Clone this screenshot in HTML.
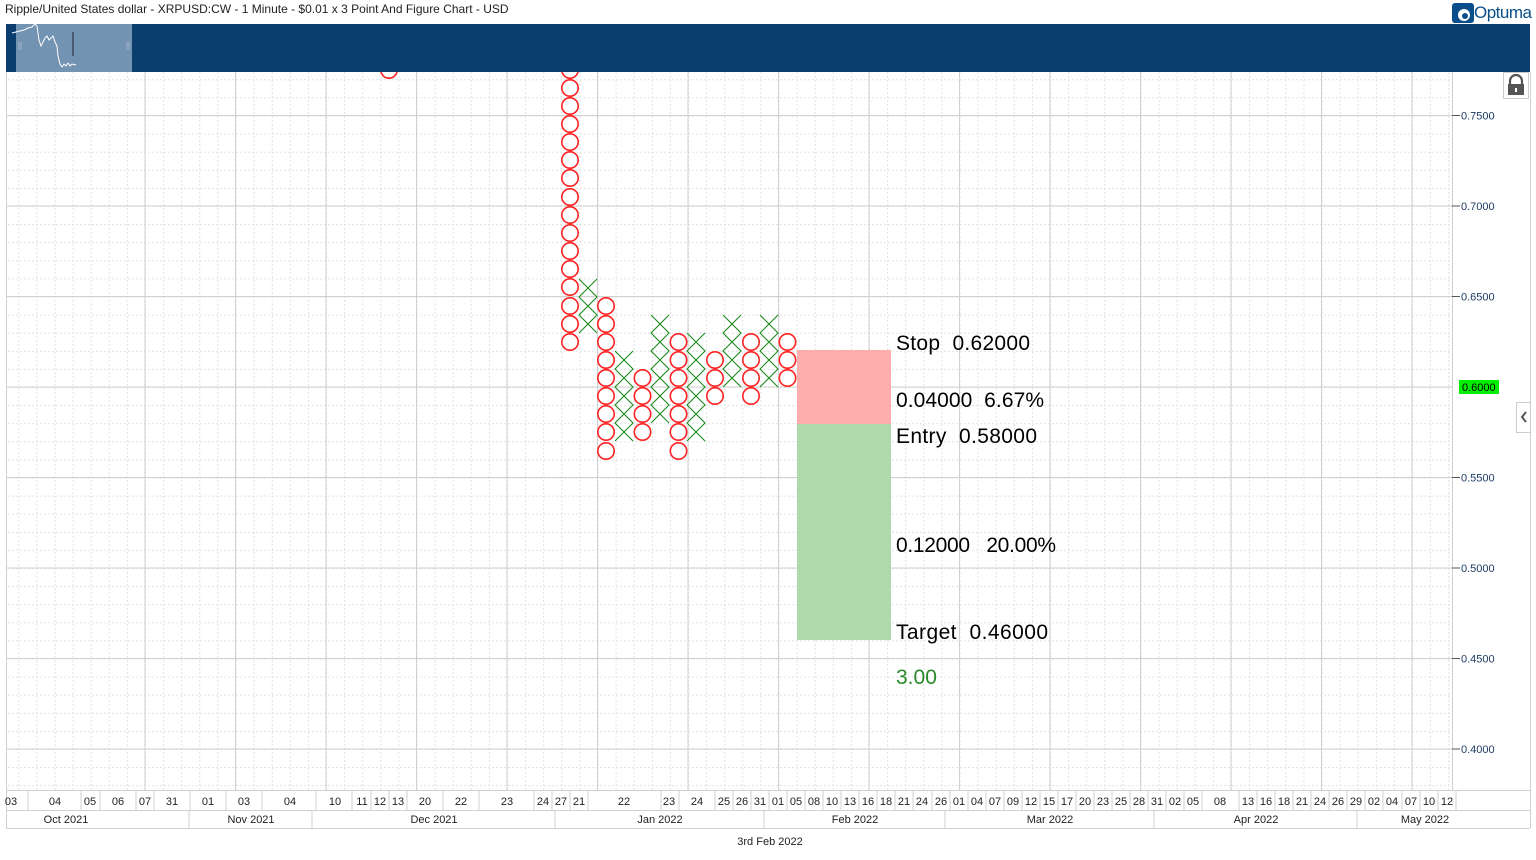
<!DOCTYPE html>
<html><head><meta charset="utf-8"><style>
body{margin:0;width:1536px;height:860px;background:#fff;overflow:hidden;font-family:"Liberation Sans","DejaVu Sans",sans-serif;position:relative}
.t{position:absolute;white-space:nowrap}
</style></head><body>
<div class="t" style="left:5px;top:2px;font-size:12px;color:#222">Ripple/United States dollar - XRPUSD:CW - 1 Minute - $0.01 x 3 Point And Figure Chart - USD</div>
<div class="t" style="left:1474px;top:3px;font-size:17px;color:#0b4f8a;letter-spacing:-0.5px">Optuma</div>
<svg style="position:absolute;left:1452px;top:3px" width="22" height="20"><rect x="0" y="0" width="22" height="20" rx="3" fill="#0b4f8a"/><circle cx="12" cy="12" r="6" fill="#fff"/><circle cx="13" cy="13" r="3" fill="#0b4f8a"/></svg>
<svg style="position:absolute;left:0;top:0" width="1536" height="860">
<defs>
<pattern id="vg" x="145" y="0" width="18.1" height="4" patternUnits="userSpaceOnUse"><rect x="0" y="0" width="1" height="2" fill="#e2e2e2"/></pattern>
<pattern id="hg" x="0" y="115.5" width="4" height="18.1" patternUnits="userSpaceOnUse"><rect x="0" y="0" width="2" height="1" fill="#e2e2e2"/></pattern>
<clipPath id="cp"><rect x="6" y="72" width="1446" height="718"/></clipPath>
</defs>
<rect x="6" y="24" width="1524" height="48" fill="#0b3d6e"/>
<rect x="16" y="24" width="116" height="48" fill="#7393b3"/>
<polyline points="12,33 16,32 20,31 24,30 28,28 32,27 35,24 37,26 39,40 41,46 43,42 45,38 47,36 49,40 51,38 53,36 55,42 57,46 58,56 60,64 62,67 64,64 66,66 68,63 70,66 72,64 76,65" fill="none" stroke="#fff" stroke-width="1"/>
<line x1="73" y1="32" x2="73" y2="56" stroke="#223" stroke-width="1"/>
<rect x="18" y="42" width="4" height="8" fill="#8aa3bf"/><rect x="126" y="42" width="4" height="8" fill="#8aa3bf"/>
<rect x="6" y="72" width="1446" height="718" fill="url(#vg)"/>
<rect x="6" y="72" width="1446" height="718" fill="url(#hg)"/>
<g stroke="#d0d0d0" stroke-width="1">
<line x1="145" y1="72" x2="145" y2="790"/><line x1="235.5" y1="72" x2="235.5" y2="790"/><line x1="326" y1="72" x2="326" y2="790"/><line x1="416.5" y1="72" x2="416.5" y2="790"/><line x1="507" y1="72" x2="507" y2="790"/><line x1="597.5" y1="72" x2="597.5" y2="790"/><line x1="688" y1="72" x2="688" y2="790"/><line x1="778.5" y1="72" x2="778.5" y2="790"/><line x1="869" y1="72" x2="869" y2="790"/><line x1="959.5" y1="72" x2="959.5" y2="790"/><line x1="1050" y1="72" x2="1050" y2="790"/><line x1="1140.5" y1="72" x2="1140.5" y2="790"/><line x1="1231" y1="72" x2="1231" y2="790"/><line x1="1321.5" y1="72" x2="1321.5" y2="790"/><line x1="1412" y1="72" x2="1412" y2="790"/>
<line x1="6" y1="115.5" x2="1452" y2="115.5"/><line x1="6" y1="206" x2="1452" y2="206"/><line x1="6" y1="296.5" x2="1452" y2="296.5"/><line x1="6" y1="387" x2="1452" y2="387"/><line x1="6" y1="477.5" x2="1452" y2="477.5"/><line x1="6" y1="568" x2="1452" y2="568"/><line x1="6" y1="658.5" x2="1452" y2="658.5"/><line x1="6" y1="749" x2="1452" y2="749"/>
<line x1="6.5" y1="72" x2="6.5" y2="828"/><line x1="1452.5" y1="72" x2="1452.5" y2="790"/><line x1="1530.5" y1="72" x2="1530.5" y2="828"/>
<line x1="6" y1="790.5" x2="1530" y2="790.5"/><line x1="6" y1="810.5" x2="1530" y2="810.5"/><line x1="6" y1="828.5" x2="1530" y2="828.5"/>
</g>
<rect x="797" y="350" width="94" height="74" fill="#ffaeae"/>
<rect x="797" y="424" width="94" height="216" fill="#b0d8ad"/>
<g fill="none" stroke="#f22" stroke-width="1.6" clip-path="url(#cp)">
<circle cx="389" cy="70" r="8.2"/>
<circle cx="570" cy="70" r="8.2"/><circle cx="570" cy="88" r="8.2"/><circle cx="570" cy="106" r="8.2"/><circle cx="570" cy="124" r="8.2"/><circle cx="570" cy="142" r="8.2"/><circle cx="570" cy="160" r="8.2"/><circle cx="570" cy="178" r="8.2"/><circle cx="570" cy="197" r="8.2"/><circle cx="570" cy="215" r="8.2"/><circle cx="570" cy="233" r="8.2"/><circle cx="570" cy="251" r="8.2"/><circle cx="570" cy="269" r="8.2"/><circle cx="570" cy="287" r="8.2"/><circle cx="570" cy="306" r="8.2"/><circle cx="570" cy="324" r="8.2"/><circle cx="570" cy="342" r="8.2"/>
<circle cx="606" cy="306" r="8.2"/><circle cx="606" cy="324" r="8.2"/><circle cx="606" cy="342" r="8.2"/><circle cx="606" cy="360" r="8.2"/><circle cx="606" cy="378" r="8.2"/><circle cx="606" cy="396" r="8.2"/><circle cx="606" cy="414" r="8.2"/><circle cx="606" cy="432" r="8.2"/><circle cx="606" cy="451" r="8.2"/>
<circle cx="642.5" cy="378" r="8.2"/><circle cx="642.5" cy="396" r="8.2"/><circle cx="642.5" cy="414" r="8.2"/><circle cx="642.5" cy="432" r="8.2"/>
<circle cx="678.5" cy="342" r="8.2"/><circle cx="678.5" cy="360" r="8.2"/><circle cx="678.5" cy="378" r="8.2"/><circle cx="678.5" cy="396" r="8.2"/><circle cx="678.5" cy="414" r="8.2"/><circle cx="678.5" cy="432" r="8.2"/><circle cx="678.5" cy="451" r="8.2"/>
<circle cx="715" cy="360" r="8.2"/><circle cx="715" cy="378" r="8.2"/><circle cx="715" cy="396" r="8.2"/>
<circle cx="751" cy="342" r="8.2"/><circle cx="751" cy="360" r="8.2"/><circle cx="751" cy="378" r="8.2"/><circle cx="751" cy="396" r="8.2"/>
<circle cx="787.5" cy="342" r="8.2"/><circle cx="787.5" cy="360" r="8.2"/><circle cx="787.5" cy="378" r="8.2"/>
</g>
<g fill="none" stroke="#1e8a1e" stroke-width="1.1">
<path d="M579,279L597,297L579,315L597,333M597,279L579,297L597,315L579,333"/>
<path d="M615,351L633,369L615,387L633,405L615,423L633,441M633,351L615,369L633,387L615,405L633,423L615,441"/>
<path d="M651,315L669,333L651,351L669,369L651,387L669,405L651,423M669,315L651,333L669,351L651,369L669,387L651,405L669,423"/>
<path d="M687,333L705,351L687,369L705,387L687,405L705,423L687,441M705,333L687,351L705,369L687,387L705,405L687,423L705,441"/>
<path d="M723,315L741,333L723,351L741,369L723,387M741,315L723,333L741,351L723,369L741,387"/>
<path d="M760,315L778,333L760,351L778,369L760,387M778,315L760,333L778,351L760,369L778,387"/>
</g>
<g stroke="#555" stroke-width="1"><line x1="1452" y1="115.5" x2="1460" y2="115.5"/><line x1="1452" y1="206" x2="1460" y2="206"/><line x1="1452" y1="296.5" x2="1460" y2="296.5"/><line x1="1452" y1="477.5" x2="1460" y2="477.5"/><line x1="1452" y1="568" x2="1460" y2="568"/><line x1="1452" y1="658.5" x2="1460" y2="658.5"/><line x1="1452" y1="749" x2="1460" y2="749"/></g>
<g font-family="Liberation Sans,sans-serif" font-size="11" fill="#1d3b66">
<text x="1461" y="119.5">0.7500</text><text x="1461" y="210">0.7000</text><text x="1461" y="300.5">0.6500</text><text x="1461" y="481.5">0.5500</text><text x="1461" y="572">0.5000</text><text x="1461" y="662.5">0.4500</text><text x="1461" y="753">0.4000</text>
</g>
<rect x="1459" y="380" width="40" height="14" fill="#00ee00"/>
<text x="1462" y="391" font-family="Liberation Sans,sans-serif" font-size="11" fill="#000">0.6000</text>
<rect x="1503.5" y="72.5" width="25" height="26" fill="#fff" stroke="#ccc"/>
<path d="M1510,84v-3a6,6 0 0 1 12,0v3" fill="none" stroke="#555" stroke-width="2.2"/>
<rect x="1508" y="84" width="16" height="11" fill="#555"/><rect x="1515" y="88" width="2" height="4" fill="#fff"/>
<rect x="1516.5" y="402.5" width="14" height="30" fill="#fff" stroke="#ccc"/>
<path d="M1526,412l-4,5l4,5" fill="none" stroke="#555" stroke-width="2"/>
<g stroke="#d0d0d0" stroke-width="1">
<line x1="28" y1="790" x2="28" y2="810"/><line x1="81" y1="790" x2="81" y2="810"/><line x1="100" y1="790" x2="100" y2="810"/><line x1="136" y1="790" x2="136" y2="810"/><line x1="154" y1="790" x2="154" y2="810"/><line x1="190" y1="790" x2="190" y2="810"/><line x1="226" y1="790" x2="226" y2="810"/><line x1="262" y1="790" x2="262" y2="810"/><line x1="316" y1="790" x2="316" y2="810"/><line x1="352" y1="790" x2="352" y2="810"/><line x1="371" y1="790" x2="371" y2="810"/><line x1="389" y1="790" x2="389" y2="810"/><line x1="407" y1="790" x2="407" y2="810"/><line x1="443" y1="790" x2="443" y2="810"/><line x1="479" y1="790" x2="479" y2="810"/><line x1="534" y1="790" x2="534" y2="810"/><line x1="552" y1="790" x2="552" y2="810"/><line x1="570" y1="790" x2="570" y2="810"/><line x1="588" y1="790" x2="588" y2="810"/><line x1="661" y1="790" x2="661" y2="810"/><line x1="679" y1="790" x2="679" y2="810"/><line x1="715" y1="790" x2="715" y2="810"/><line x1="733" y1="790" x2="733" y2="810"/><line x1="751" y1="790" x2="751" y2="810"/><line x1="769" y1="790" x2="769" y2="810"/><line x1="787" y1="790" x2="787" y2="810"/><line x1="805" y1="790" x2="805" y2="810"/><line x1="823" y1="790" x2="823" y2="810"/><line x1="841" y1="790" x2="841" y2="810"/><line x1="859" y1="790" x2="859" y2="810"/><line x1="877" y1="790" x2="877" y2="810"/><line x1="895" y1="790" x2="895" y2="810"/><line x1="913" y1="790" x2="913" y2="810"/><line x1="932" y1="790" x2="932" y2="810"/><line x1="950" y1="790" x2="950" y2="810"/><line x1="968" y1="790" x2="968" y2="810"/><line x1="986" y1="790" x2="986" y2="810"/><line x1="1004" y1="790" x2="1004" y2="810"/><line x1="1022" y1="790" x2="1022" y2="810"/><line x1="1040" y1="790" x2="1040" y2="810"/><line x1="1058" y1="790" x2="1058" y2="810"/><line x1="1076" y1="790" x2="1076" y2="810"/><line x1="1094" y1="790" x2="1094" y2="810"/><line x1="1112" y1="790" x2="1112" y2="810"/><line x1="1130" y1="790" x2="1130" y2="810"/><line x1="1148" y1="790" x2="1148" y2="810"/><line x1="1166" y1="790" x2="1166" y2="810"/><line x1="1184" y1="790" x2="1184" y2="810"/><line x1="1202" y1="790" x2="1202" y2="810"/><line x1="1239" y1="790" x2="1239" y2="810"/><line x1="1257" y1="790" x2="1257" y2="810"/><line x1="1275" y1="790" x2="1275" y2="810"/><line x1="1293" y1="790" x2="1293" y2="810"/><line x1="1311" y1="790" x2="1311" y2="810"/><line x1="1329" y1="790" x2="1329" y2="810"/><line x1="1347" y1="790" x2="1347" y2="810"/><line x1="1365" y1="790" x2="1365" y2="810"/><line x1="1383" y1="790" x2="1383" y2="810"/><line x1="1402" y1="790" x2="1402" y2="810"/><line x1="1420" y1="790" x2="1420" y2="810"/><line x1="1438" y1="790" x2="1438" y2="810"/><line x1="1456" y1="790" x2="1456" y2="810"/>
<line x1="189" y1="810" x2="189" y2="828"/><line x1="312" y1="810" x2="312" y2="828"/><line x1="555" y1="810" x2="555" y2="828"/><line x1="764" y1="810" x2="764" y2="828"/><line x1="945" y1="810" x2="945" y2="828"/><line x1="1154" y1="810" x2="1154" y2="828"/><line x1="1357" y1="810" x2="1357" y2="828"/>
</g>
<g font-family="Liberation Sans,sans-serif" font-size="11" fill="#222" text-anchor="middle">
<text x="11" y="805">03</text><text x="55" y="805">04</text><text x="90" y="805">05</text><text x="118" y="805">06</text><text x="145" y="805">07</text><text x="172" y="805">31</text><text x="208" y="805">01</text><text x="244" y="805">03</text><text x="290" y="805">04</text><text x="335" y="805">10</text><text x="362" y="805">11</text><text x="380" y="805">12</text><text x="398" y="805">13</text><text x="425" y="805">20</text><text x="461" y="805">22</text><text x="507" y="805">23</text><text x="543" y="805">24</text><text x="561" y="805">27</text><text x="579" y="805">21</text><text x="624" y="805">22</text><text x="669" y="805">23</text><text x="697" y="805">24</text><text x="724" y="805">25</text><text x="742" y="805">26</text><text x="760" y="805">31</text><text x="778" y="805">01</text><text x="796" y="805">05</text><text x="814" y="805">08</text><text x="832" y="805">10</text><text x="850" y="805">13</text><text x="868" y="805">16</text><text x="886" y="805">18</text><text x="904" y="805">21</text><text x="922" y="805">24</text><text x="941" y="805">26</text><text x="959" y="805">01</text><text x="977" y="805">04</text><text x="995" y="805">07</text><text x="1013" y="805">09</text><text x="1031" y="805">12</text><text x="1049" y="805">15</text><text x="1067" y="805">17</text><text x="1085" y="805">20</text><text x="1103" y="805">23</text><text x="1121" y="805">25</text><text x="1139" y="805">28</text><text x="1157" y="805">31</text><text x="1175" y="805">02</text><text x="1193" y="805">05</text><text x="1220" y="805">08</text><text x="1248" y="805">13</text><text x="1266" y="805">16</text><text x="1284" y="805">18</text><text x="1302" y="805">21</text><text x="1320" y="805">24</text><text x="1338" y="805">26</text><text x="1356" y="805">29</text><text x="1374" y="805">02</text><text x="1392" y="805">04</text><text x="1411" y="805">07</text><text x="1429" y="805">10</text><text x="1447" y="805">12</text>
<text x="66" y="823">Oct 2021</text><text x="251" y="823">Nov 2021</text><text x="434" y="823">Dec 2021</text><text x="660" y="823">Jan 2022</text><text x="855" y="823">Feb 2022</text><text x="1050" y="823">Mar 2022</text><text x="1256" y="823">Apr 2022</text><text x="1425" y="823">May 2022</text>
<text x="770" y="845">3rd Feb 2022</text>
</g>
<g font-family="Liberation Sans,DejaVu Sans,sans-serif" font-size="21" fill="#000">
<text x="896" y="350" xml:space="preserve" textLength="134">Stop  0.62000</text>
<text x="896" y="407" xml:space="preserve" textLength="148">0.04000  6.67%</text>
<text x="896" y="443" xml:space="preserve" textLength="141">Entry  0.58000</text>
<text x="896" y="552" xml:space="preserve" textLength="160">0.12000   20.00%</text>
<text x="896" y="639" xml:space="preserve" textLength="152">Target  0.46000</text>
<text x="896" y="684" fill="#2a8a2a">3.00</text>
</g>
</svg>
</body></html>
